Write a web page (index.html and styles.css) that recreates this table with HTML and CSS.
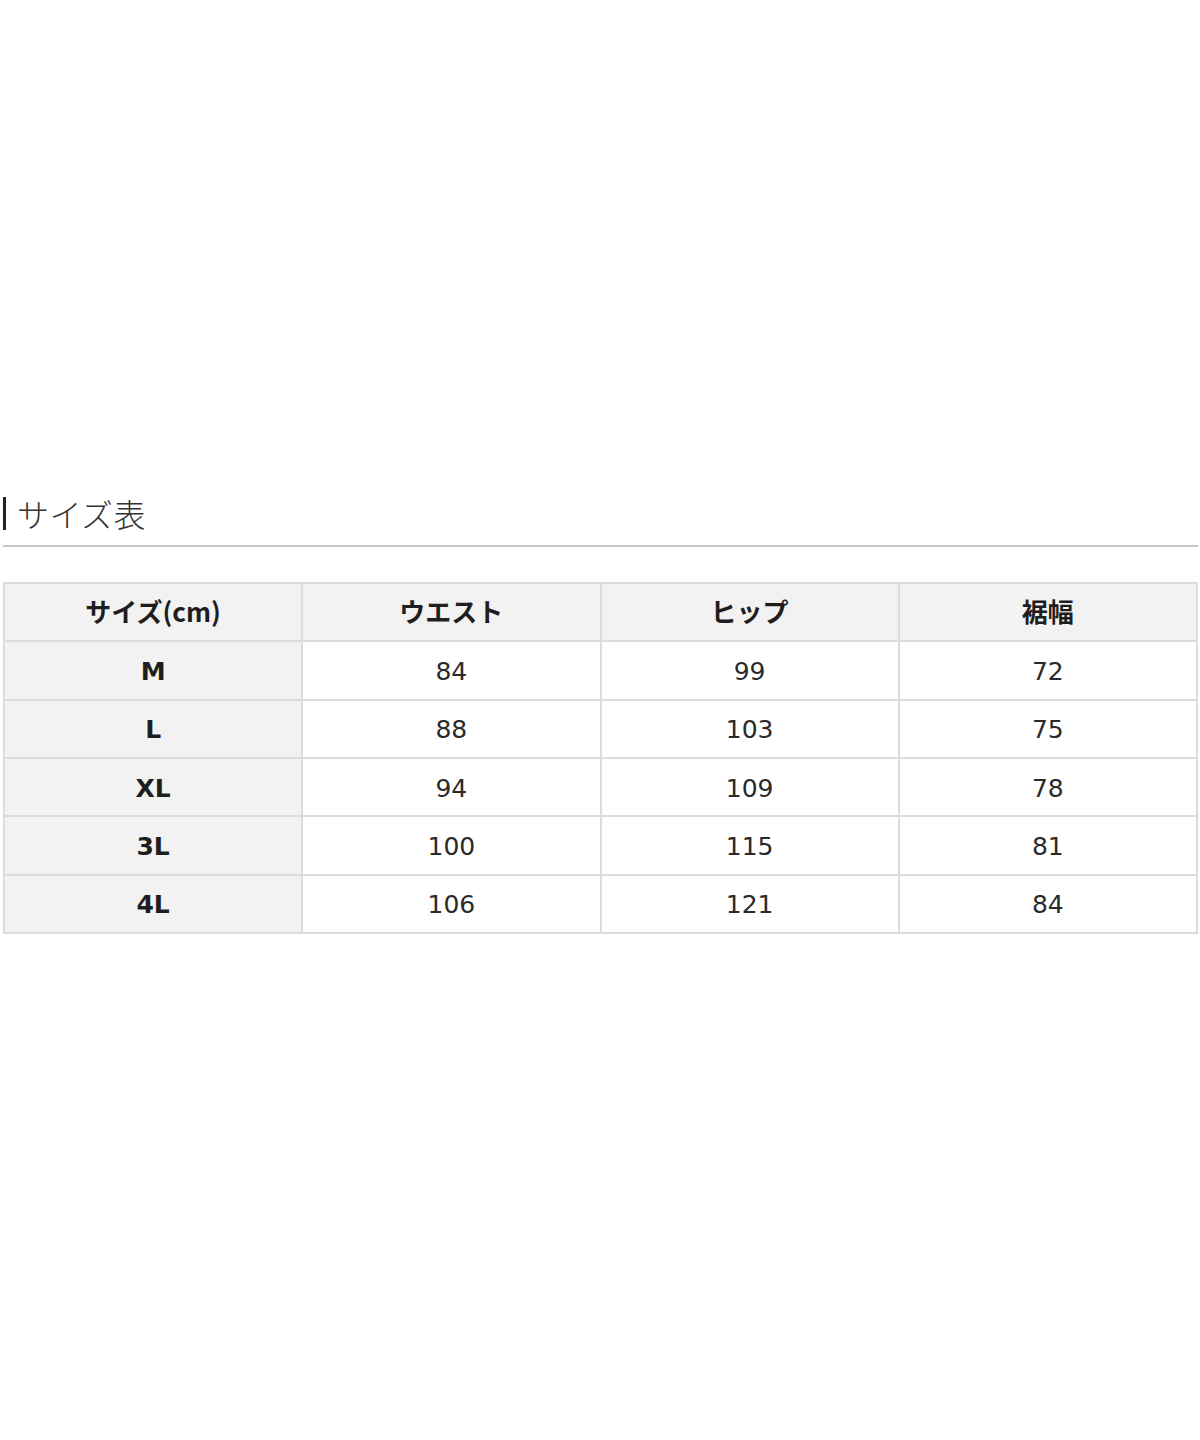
FILE: index.html
```html
<!DOCTYPE html>
<html lang="ja">
<head>
<meta charset="utf-8">
<link rel="stylesheet" href="styles.css">
</head>
<body>
<div class="page">
  <h2 class="title"><span class="bar"></span><span class="title-text">サイズ表</span></h2>
  <table class="size-table">
    <thead>
      <tr><th>サイズ(cm)</th><th>ウエスト</th><th>ヒップ</th><th>裾幅</th></tr>
    </thead>
    <tbody>
      <tr><th>M</th><td>84</td><td>99</td><td>72</td></tr>
      <tr><th>L</th><td>88</td><td>103</td><td>75</td></tr>
      <tr><th>XL</th><td>94</td><td>109</td><td>78</td></tr>
      <tr><th>3L</th><td>100</td><td>115</td><td>81</td></tr>
      <tr><th>4L</th><td>106</td><td>121</td><td>84</td></tr>
    </tbody>
  </table>
</div>
</body>
</html>
```

FILE: styles.css
```css
html, body {
  margin: 0;
  padding: 0;
  background: #fff;
}
.page {
  padding: 493px 2px 0 3px;
  font-family: "DejaVu Sans", "Noto Sans CJK JP", sans-serif;
  color: #222;
}
.title {
  margin: 0;
  display: flex;
  align-items: center;
  gap: 11px;
  height: 40px;
  padding-bottom: 12px;
  border-bottom: 2px solid #c6c6c6;
  font-weight: normal;
}
.bar {
  width: 3px;
  height: 33px;
  background: #222;
}
.title-text {
  font-family: "Noto Sans CJK JP", sans-serif;
  font-size: 32px;
  font-weight: 300;
  color: #333;
  letter-spacing: 0.5px;
}
.size-table {
  margin-top: 35px;
  width: 1195px;
  border-collapse: collapse;
  table-layout: fixed;
}
.size-table th,
.size-table td {
  border: 2px solid #dcdcdc;
  height: 54.33px;
  padding: 2px 0 0;
  text-align: center;
  font-size: 25px;
}
.size-table th {
  background: #f2f2f2;
  font-weight: bold;
  color: #1e1e1e;
}
.size-table thead th {
  font-family: "Noto Sans CJK JP", sans-serif;
  font-size: 26px;
  height: 52.33px;
  padding: 0 0 4px;
}
.size-table td {
  background: #fff;
  font-weight: normal;
  color: #2a2a2a;
}
```
